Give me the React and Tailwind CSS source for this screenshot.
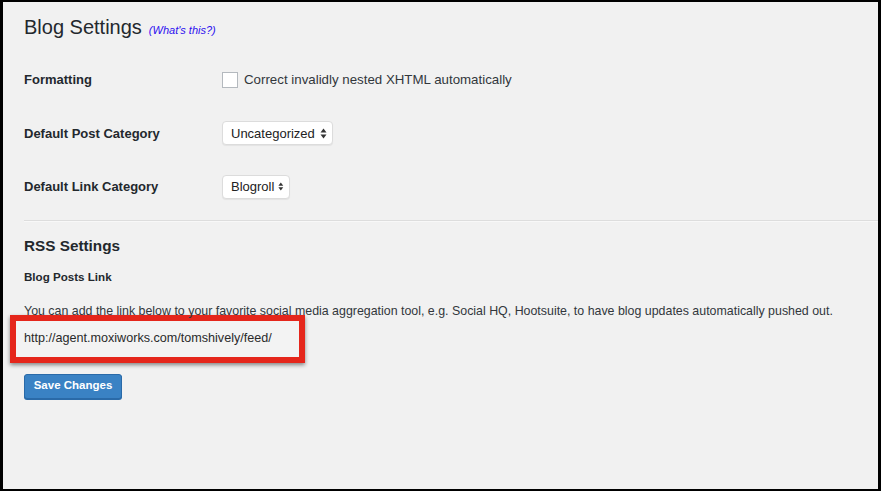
import React from 'react';

function SelectBox({ label, width }) {
  return (
    <div className={`flex h-[24px] items-center justify-between rounded-[4px] border border-[#dcdcdc] bg-white pl-[8px] pr-[5px] shadow-[0_1px_1px_rgba(0,0,0,0.06)] ${width}`}>
      <span className="text-[13px] text-[#222]">{label}</span>
      <svg width="7" height="11" viewBox="0 0 7 11" className="ml-[4px]">
        <path d="M3.5 0.5 L6.5 4.5 L0.5 4.5 Z" fill="#333" />
        <path d="M3.5 10.5 L6.5 6.5 L0.5 6.5 Z" fill="#333" />
      </svg>
    </div>
  );
}

function SettingRow({ label, children }) {
  return (
    <div className="flex h-[53.5px] items-center">
      <div className="w-[198px] text-[13px] font-bold text-[#23282d]">{label}</div>
      <div className="flex items-center">{children}</div>
    </div>
  );
}

export default function App() {
  return (
    <div
      className="relative box-border h-[491px] w-[881px] overflow-hidden border-t-2 border-b-2 border-l-[3px] border-r-[3px] border-black bg-[#f1f1f1] text-[#32373c]"
      style={{ fontFamily: '"Liberation Sans", Arial, sans-serif' }}
    >
      {/* bits of a window behind, peeking at the left edge */}
      <div className="absolute left-[-3px] top-[381px] h-[10px] w-[2px] bg-[#3d7fc4]" />
      <div className="absolute left-[-3px] top-[401px] h-[9px] w-[2px] bg-[#3d7fc4]" />

      <div className="pt-[11px]">
        <div className="flex items-baseline pl-[21px]">
          <h1 className="text-[20px] leading-[28px] text-[#23282d]">Blog Settings</h1>
          <a className="ml-[7px] text-[11px] italic text-[#2c0ff0]">(What's this?)</a>
        </div>

        <div className="mt-[12px] pl-[21px]">
          <SettingRow label="Formatting">
            <span className="box-border h-[16px] w-[16px] border border-[#b4b9be] bg-white" />
            <span className="ml-[6px] text-[13.3px] text-[#32373c]">Correct invalidly nested XHTML automatically</span>
          </SettingRow>
          <SettingRow label="Default Post Category">
            <SelectBox label="Uncategorized" width="w-[111px]" />
          </SettingRow>
          <SettingRow label="Default Link Category">
            <SelectBox label="Blogroll" width="w-[68px]" />
          </SettingRow>
        </div>

        <div className="ml-[21px] mt-[6px] h-[2px] border-t border-b border-t-[#dddddd] border-b-[#f8f8f8]" />

        <div className="pl-[21px]">
          <h2 className="mt-[13px] text-[15.3px] font-bold leading-[22px] text-[#23282d]">RSS Settings</h2>
          <h3 className="mt-[11px] text-[11.6px] font-bold leading-[18px] text-[#23282d]">Blog Posts Link</h3>
          <p className="mt-[17px] text-[12.4px] leading-[16px] text-[#32373c]">
            You can add the link below to your favorite social media aggregation tool, e.g. Social HQ, Hootsuite, to have blog updates automatically pushed out.
          </p>

          <div className="-ml-[14px] mt-[-4px] box-border flex h-[48px] w-[295px] items-center border-[6px] border-[#e5261b] bg-[#f3f3f3] pl-[8px] shadow-[0_2px_4px_rgba(0,0,0,0.45)]">
            <span className="text-[12.6px] text-[#2a2a2a]">http://agent.moxiworks.com/tomshively/feed/</span>
          </div>

          <button className="mt-[11px] box-border h-[25px] w-[98px] rounded-[3px] border border-[#2a6aa8] bg-[#3a82c4] text-[11.5px] font-bold text-white shadow-[0_1px_0_#2a6aa8]">
            Save Changes
          </button>
        </div>
      </div>
    </div>
  );
}
